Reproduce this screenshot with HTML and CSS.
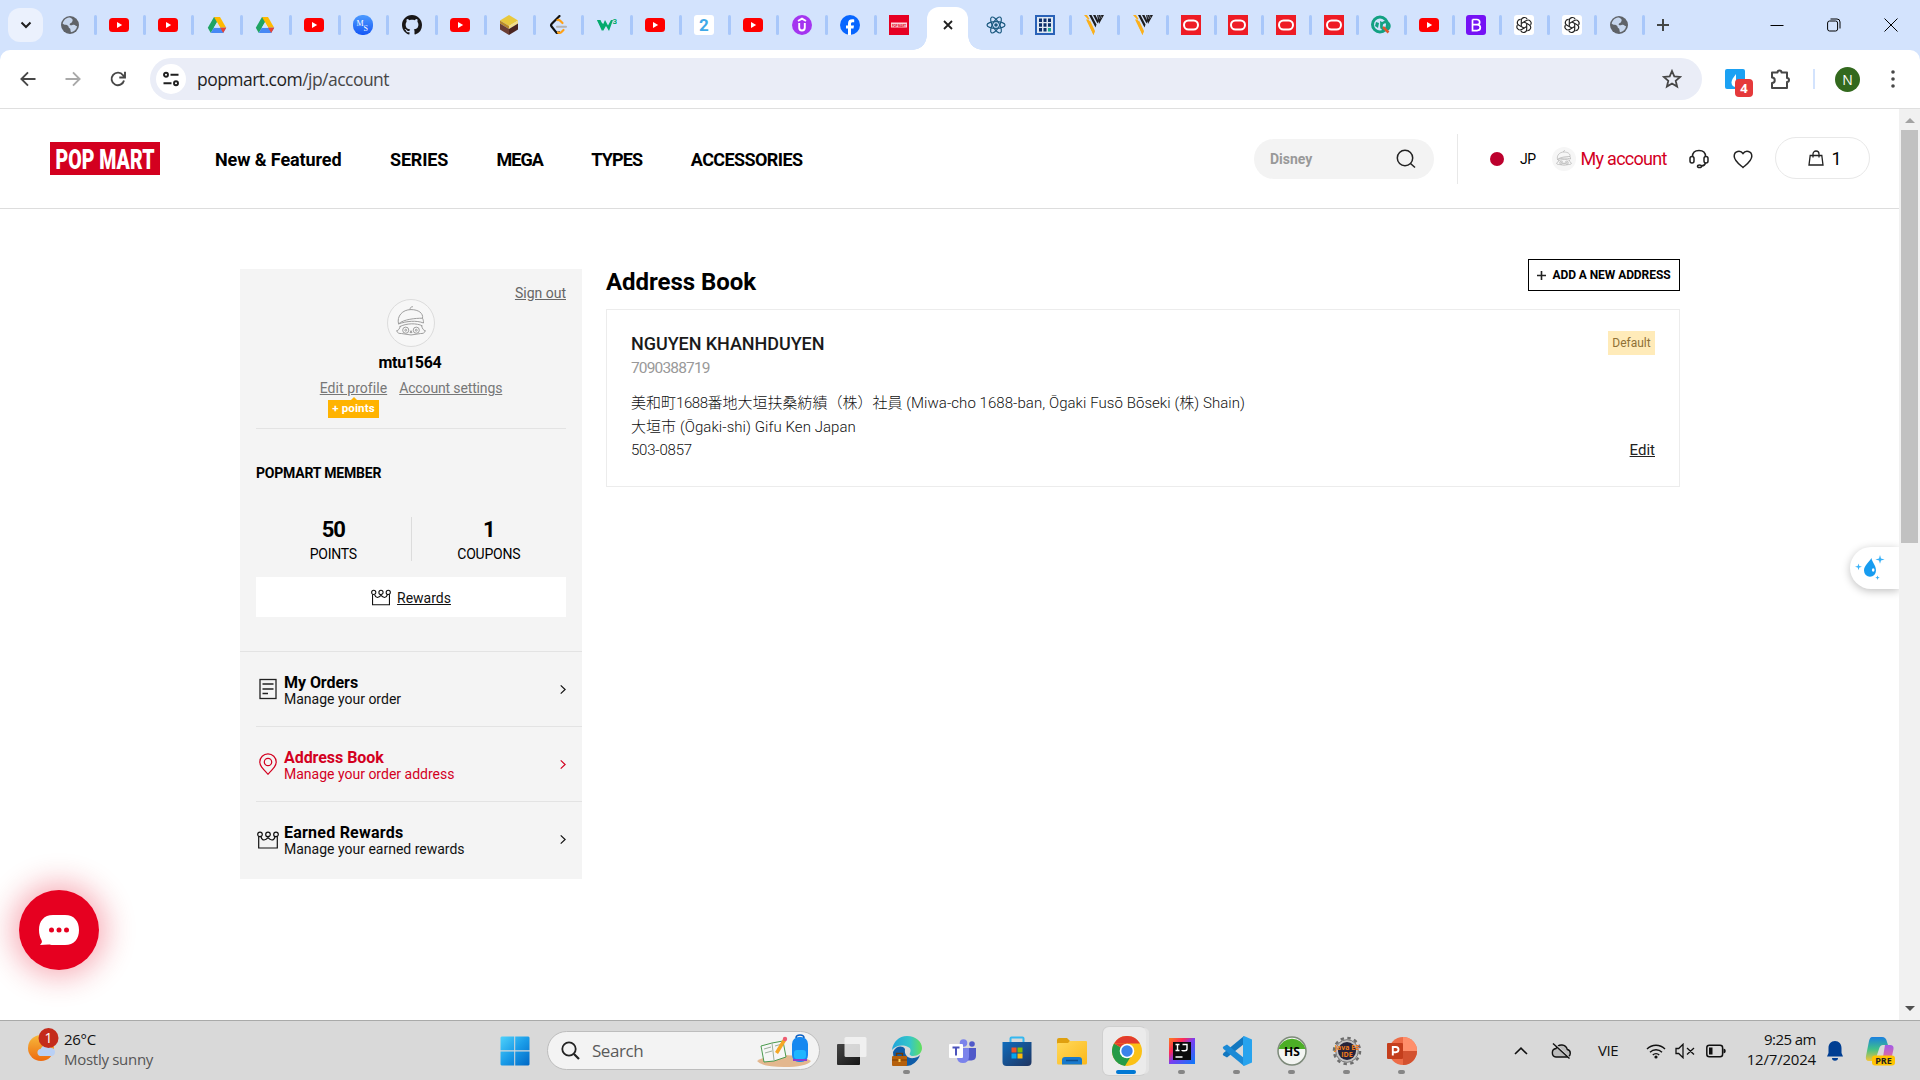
FILE: index.html
```html
<!DOCTYPE html>
<html lang="en">
<head>
<meta charset="utf-8">
<title>POP MART</title>
<link rel="stylesheet" href="styles.css">
</head>
<body>
<svg class="defs" width="0" height="0">
  <defs>
    <linearGradient id="g-win" x1="0" y1="0" x2="1" y2="1"><stop offset="0" stop-color="#4fd2fb"/><stop offset=".5" stop-color="#1a9ce8"/><stop offset="1" stop-color="#0067c5"/></linearGradient>
    <linearGradient id="g-edge" x1="0" y1="0" x2="1" y2="0"><stop offset="0" stop-color="#20a5dc"/><stop offset=".6" stop-color="#35c6c8"/><stop offset="1" stop-color="#63e05a"/></linearGradient>
    <linearGradient id="g-store" x1="0" y1="0" x2="1" y2="1"><stop offset="0" stop-color="#0f6cbd"/><stop offset="1" stop-color="#1f3460"/></linearGradient>
    <linearGradient id="g-folder" x1="0" y1="0" x2="1" y2="1"><stop offset="0" stop-color="#ffd95c"/><stop offset="1" stop-color="#fbb81a"/></linearGradient>
    <linearGradient id="g-ij" x1="0" y1="0" x2="1" y2="1"><stop offset="0" stop-color="#fc801d"/><stop offset=".3" stop-color="#fe2857"/><stop offset=".5" stop-color="#7a3df0"/><stop offset="1" stop-color="#087cfa"/></linearGradient>
    <linearGradient id="g-cop" x1="0" y1="0" x2="0" y2="1"><stop offset="0" stop-color="#1a7fe0"/><stop offset=".5" stop-color="#3fc08a"/><stop offset="1" stop-color="#f3c63a"/></linearGradient>
    <linearGradient id="g-cop2" x1="0" y1="0" x2="0" y2="1"><stop offset="0" stop-color="#a35be8"/><stop offset="1" stop-color="#f2708a"/></linearGradient>
    <linearGradient id="g-sun" x1="0" y1="0" x2="0" y2="1"><stop offset="0" stop-color="#f6b93b"/><stop offset="1" stop-color="#ee6a10"/></linearGradient>
    <linearGradient id="g-ms" x1="0" y1="0" x2="0" y2="1"><stop offset="0" stop-color="#4d9bff"/><stop offset="1" stop-color="#1557f5"/></linearGradient>
    <linearGradient id="g-task" x1="0" y1="0" x2="1" y2="1"><stop offset="0" stop-color="#444"/><stop offset="1" stop-color="#161616"/></linearGradient>
    <symbol id="globe" viewBox="0 0 20 20"><circle cx="10" cy="10" r="9" fill="#5f6368"/><path d="M9 2.500c-3 .3-5.800 3-6.300 6.300 1.800 1.700 3.800.7 5.300 1.900 1 .8.300 2 1.600 2.600 1.200.5.600 2.300 1.400 3.900 3.200-.5 5.600-2.900 6.100-6-1.600-.2-1.700-1.500-3.300-1.500-1.500 0-1.900 1-3.300.5-1.600-.6-.3-2.300.8-2.500 1.500-.3.500-1.500 1.500-2.700C11.800 3 10 2.500 9 2.500z" fill="#d3e3fd" opacity=".9"/></symbol>
    <symbol id="yt" viewBox="0 0 20 20"><rect y="3" width="20" height="14" rx="3.500" fill="#f00"/><path d="M8 7l5.200 3L8 13z" fill="#fff"/></symbol>
    <symbol id="drive" viewBox="0 0 20 20"><path d="M7 2h6l-6.300 11L3.800 18 .8 12.800z" fill="#1fa463"/><path d="M7 2h6l6.200 10.800h-6z" fill="#ffba00"/><path d="M3.800 18l3-5.200h12.400L16.200 18z" fill="#4688f4"/><path d="M13.200 12.800h6L16.200 18z" fill="#ea4335"/><path d="M10 7.200l3.200 5.600H6.800z" fill="#d3e3fd"/></symbol>
    <symbol id="v" viewBox="0 0 20 20"><path d="M0 0h3l2.500 4-1.400.6zM4 7l2-1.500L11 16l-1.500 4z" fill="#fbb01b"/><path d="M2 4.500h2.500l6 12L9.500 20z" fill="#fbb01b"/><path d="M5 0h2.500l5 9.500-1 3zM9 0h2.500l3 6-1 2.500zM13 0h7l-5 9z" fill="#1d1d1f"/><path d="M14 0l2 4M16.500 0l1 3" stroke="#d3e3fd" stroke-width=".5"/></symbol>
    <symbol id="oracle" viewBox="0 0 20 20"><path d="M0 0h20v20H0z" fill="#ee1c25"/><rect x="3" y="5.500" width="14" height="9" rx="4.500" fill="none" stroke="#fff" stroke-width="2"/></symbol>
    <path id="strand" d="M7.300 11.500V5.700a3.100 3.100 0 0 1 5.900-1.400"/>
    <symbol id="gpt" viewBox="0 0 20 20"><rect width="20" height="20" rx="3" fill="#fff"/><g fill="none" stroke="#222" stroke-width="1.150"><use href="#strand"/><use href="#strand" transform="rotate(60 10 10)"/><use href="#strand" transform="rotate(120 10 10)"/><use href="#strand" transform="rotate(180 10 10)"/><use href="#strand" transform="rotate(240 10 10)"/><use href="#strand" transform="rotate(300 10 10)"/></g></symbol>
    <symbol id="crown" viewBox="0 0 22 18"><g fill="none" stroke="currentColor" stroke-width="1.200"><circle cx="3" cy="3.400" r="2.300"/><circle cx="11" cy="3.400" r="2.300"/><circle cx="19" cy="3.400" r="2.300"/><path d="M1.700 5.500V17h18.600V5.500M4 6q1 3 3 3 2.200-.3 4-2.300 1.800 2 4 2.300 2 0 3-3"/></g></symbol>
    <symbol id="molly" viewBox="0 0 48 48"><g fill="none" stroke="#9a9a9a" stroke-width="1"><path d="M11 25c-2-8 4-15 13-15 8 0 13 4 12 9-7 0-20 1-25 6zM23 10c0-2 1-3 3-3M11 25c8-3 19-4 26-1M36 19c1 2 1 3 1 5M12 28c7-4 18-4 24-1"/><path d="M13 27c-1 3-2 5-4 5 1 3 3 3 5 3q10 3 20 0c2 0 4 0 5-3-2 0-3-2-4-5"/><circle cx="18.500" cy="31.500" r="3.200"/><circle cx="29.500" cy="31.500" r="3.200"/><circle cx="18.500" cy="31.500" r="1"/><circle cx="29.500" cy="31.500" r="1"/><path d="M23 34l1-2 1 2z"/></g></symbol>
    <symbol id="chev" viewBox="0 0 8 12"><path d="M1.500 1.500L6.300 6l-4.800 4.500" fill="none" stroke="currentColor" stroke-width="1.300"/></symbol>
  </defs>
</svg>

<header class="tabstrip">
  <div class="tab-search"><svg width="12" height="8" viewBox="0 0 12 8"><path d="M1.500 1.500L6 6l4.500-4.500" fill="none" stroke="#1f1f1f" stroke-width="2"/></svg></div>
  <div class="tabs">
    <div class="tab"><svg><use href="#globe"/></svg></div>
    <div class="tab"><svg><use href="#yt"/></svg></div>
    <div class="tab"><svg><use href="#yt"/></svg></div>
    <div class="tab"><svg><use href="#drive"/></svg></div>
    <div class="tab"><svg><use href="#drive"/></svg></div>
    <div class="tab"><svg><use href="#yt"/></svg></div>
    <div class="tab"><svg viewBox="0 0 20 20"><rect width="20" height="20" rx="9" fill="url(#g-ms)"/><text x="3.500" y="11" class="ms">M</text><text x="10.500" y="15.500" class="ms">S</text></svg></div>
    <div class="tab"><svg viewBox="0 0 16 16"><path fill="#191717" d="M8 0C3.580 0 0 3.580 0 8c0 3.540 2.290 6.530 5.470 7.590.4.070.55-.17.55-.38 0-.19-.01-.82-.01-1.490-2.010.37-2.530-.49-2.690-.94-.09-.23-.48-.94-.82-1.130-.28-.15-.68-.52-.01-.53.63-.01 1.080.58 1.230.82.72 1.210 1.870.87 2.330.66.07-.52.28-.87.51-1.070-1.780-.2-3.640-.89-3.640-3.950 0-.87.31-1.590.82-2.150-.08-.2-.36-1.020.08-2.120 0 0 .67-.21 2.200.82.64-.18 1.320-.27 2-.27s1.360.09 2 .27c1.530-1.040 2.200-.82 2.200-.82.44 1.100.16 1.920.08 2.120.51.56.82 1.270.82 2.150 0 3.070-1.870 3.750-3.650 3.950.29.25.54.73.54 1.480 0 1.070-.01 1.930-.01 2.200 0 .21.15.46.55.38A8.010 8.010 0 0 0 16 8c0-4.420-3.580-8-8-8z"/></svg></div>
    <div class="tab"><svg><use href="#yt"/></svg></div>
    <div class="tab"><svg viewBox="0 0 20 20"><path d="M10 0l9 5.500L10 11 1 5.500z" fill="#e8c83c"/><path d="M1 5.500L10 11v3L1 8.500z" fill="#b98a2a"/><path d="M19 5.500L10 11v3l9-5.500z" fill="#f4dc86"/><path d="M1 8.500l9 5.500v6l-9-5.500z" fill="#6b3f35"/><path d="M19 8.500L10 14v6l9-5.500z" fill="#4a2520"/></svg></div>
    <div class="tab"><svg viewBox="0 0 20 20"><path d="M11.500 1L4 8.500q-1.800 1.800 0 3.600l4 5q1.500 1.500 3 .2" fill="none" stroke="#111" stroke-width="2.200" stroke-linecap="round"/><path d="M9.500 5q1.500-.5 3 1l2 2M10 17.500q2 1 3.500-.5l2-2" fill="none" stroke="#ffa116" stroke-width="2.200" stroke-linecap="round"/><path d="M9 11.700h9" stroke="#b3b3b3" stroke-width="2" stroke-linecap="round"/></svg></div>
    <div class="tab"><svg viewBox="0 0 20 20"><path d="M0 5h3.500l2.300 5L8 5l3 5.500L14 5h2l-4 11-3-5-3 5z" fill="#04aa6d"/><path d="M0 5l5 11 3-6z" fill="#04aa6d"/><text x="15.500" y="9" class="w3">3</text></svg></div>
    <div class="tab"><svg><use href="#yt"/></svg></div>
    <div class="tab"><svg viewBox="0 0 20 20"><rect width="20" height="20" rx="3" fill="#fff"/><text x="10" y="16" text-anchor="middle" class="two">2</text></svg></div>
    <div class="tab"><svg><use href="#yt"/></svg></div>
    <div class="tab"><svg viewBox="0 0 20 20"><circle cx="10" cy="10" r="10" fill="#a435f0"/><path d="M6 6l4-2.300L14 6M7.200 8v4.500q0 3 2.800 3t2.800-3V8" fill="none" stroke="#fff" stroke-width="1.900"/></svg></div>
    <div class="tab"><svg viewBox="0 0 20 20"><circle cx="10" cy="10" r="10" fill="#0866ff"/><path d="M8 20v-6.500H6v-3h2V8.700c0-3 1.400-4.400 4.300-4.400.6 0 1.500.1 1.900.2v2.700h-1.300c-1.500 0-1.900.6-1.900 1.900v1.400h3l-.5 3H11V20z" fill="#fff"/></svg></div>
    <div class="tab nosep"><svg viewBox="0 0 20 20"><path d="M0 0h20v20H0z" fill="#e60023"/><rect x="2" y="7.500" width="16" height="5" fill="#fbd5d9"/><text x="3" y="11.500" textLength="14" class="pm">POP MART</text></svg></div>
    <div class="tab active"><span class="shape"><svg viewBox="0 0 12 12"><path d="M2 2l8 8M10 2l-8 8" stroke="#1f1f1f" stroke-width="1.800"/></svg></span></div>
    <div class="tab"><svg viewBox="0 0 20 20"><g fill="none" stroke="#1c5a80" stroke-width="1.200"><ellipse cx="10" cy="10" rx="9" ry="3.400"/><ellipse cx="10" cy="10" rx="9" ry="3.400" transform="rotate(60 10 10)"/><ellipse cx="10" cy="10" rx="9" ry="3.400" transform="rotate(120 10 10)"/></g><circle cx="10" cy="10" r="1.800" fill="#1c5a80"/></svg></div>
    <div class="tab"><svg viewBox="0 0 20 20"><rect x="1" y="1" width="18" height="18" fill="#dfe8f2" stroke="#2a62b8" stroke-width="2"/><path d="M4 3.500h3v3.500H4zM8.500 3.500h3v3.500h-3zM13 3.500h3v3.500h-3zM4 8.300h3v3.500H4zM8.500 8.300h3v3.500h-3zM13 8.300h3v3.500h-3zM4 13h3v3.500H4zM8.500 13h3v3.500h-3z" fill="#0d2f6b"/><path d="M13 13h3v3.500h-3z" fill="#1ba58c"/></svg></div>
    <div class="tab"><svg><use href="#v"/></svg></div>
    <div class="tab"><svg><use href="#v"/></svg></div>
    <div class="tab slim"><svg><use href="#oracle"/></svg></div>
    <div class="tab slim"><svg><use href="#oracle"/></svg></div>
    <div class="tab slim"><svg><use href="#oracle"/></svg></div>
    <div class="tab slim"><svg><use href="#oracle"/></svg></div>
    <div class="tab slim"><svg viewBox="0 0 20 20"><circle cx="9" cy="9.500" r="7.500" fill="none" stroke="#12a182" stroke-width="3"/><circle cx="14.500" cy="11" r="4" fill="none" stroke="#12a182" stroke-width="2.500"/><path d="M5 7l3 1-1 5-3-2zM9 6l2 1v5l-1.500 2z" fill="#12a182"/><path d="M12 12l5.500 5.500" stroke="#e0562d" stroke-width="2.500"/></svg></div>
    <div class="tab slim"><svg><use href="#yt"/></svg></div>
    <div class="tab slim"><svg viewBox="0 0 20 20"><rect width="20" height="20" rx="3" fill="#7512f5"/><path d="M6.500 4.500h4.200q3 0 3 2.700 0 2.400-3 2.400H6.500M6.500 9.600h4.500q3.300 0 3.300 3 0 3-3.300 3H6.500zV4.500" fill="none" stroke="#fff" stroke-width="1.700"/></svg></div>
    <div class="tab slim"><svg><use href="#gpt"/></svg></div>
    <div class="tab slim"><svg><use href="#gpt"/></svg></div>
    <div class="tab slim"><svg><use href="#globe"/></svg></div>
  </div>
  <div class="new-tab"><svg width="14" height="14" viewBox="0 0 14 14"><path d="M7 1v12M1 7h12" stroke="#444746" stroke-width="2"/></svg></div>
  <div class="win-ctl">
    <svg width="14" height="14" viewBox="0 0 14 14"><path d="M.5 7.500h13" stroke="#000"/></svg>
    <svg width="14" height="14" viewBox="0 0 14 14"><rect x=".6" y="3" width="10" height="10" rx="2" fill="none" stroke="#000"/><path d="M3.500 1h6.500q3 0 3 3v6.500" fill="none" stroke="#000"/></svg>
    <svg width="14" height="14" viewBox="0 0 14 14"><path d="M.5.5l13 13M13.500.5l-13 13" stroke="#000"/></svg>
  </div>
</header>

<div class="toolbar-wrap"><div class="toolbar">
  <div class="nav-btns">
    <svg width="16" height="16" viewBox="0 0 16 16"><path d="M15.500 8H1.500M8 1.300L1.400 8 8 14.700" fill="none" stroke="#474747" stroke-width="1.900"/></svg>
    <svg width="16" height="16" viewBox="0 0 16 16"><path d="M.5 8h14M8 1.300L14.600 8 8 14.700" fill="none" stroke="#a9a9a9" stroke-width="1.900"/></svg>
    <svg width="16" height="16" viewBox="0 0 16 16"><path d="M14 9.500A6.300 6.300 0 1 1 13 4.200L14.500 6M15 .8v5.700H9.300" fill="none" stroke="#474747" stroke-width="1.900"/></svg>
  </div>
  <div class="omnibox">
    <span class="site-info"><svg width="16" height="16" viewBox="0 0 16 16"><g fill="none" stroke="#1f1f1f" stroke-width="1.900"><circle cx="3" cy="3.700" r="2"/><path d="M7.500 3.700H15.500M.5 12.300h8"/><circle cx="13" cy="12.300" r="2"/></g></svg></span>
    <span class="url">popmart.com<span class="path">/jp/account</span></span>
    <svg class="star" width="20" height="20" viewBox="0 0 20 20"><path d="M10 2l2.300 5.400 5.900.5-4.500 3.900 1.400 5.800L10 14.500l-5.100 3.100 1.400-5.800L1.800 7.900l5.900-.5z" fill="none" stroke="#474747" stroke-width="1.800"/></svg>
  </div>
  <div class="ext"><svg width="20" height="20" viewBox="0 0 20 20"><rect width="20" height="20" rx="2" fill="#1ba1f3"/><path d="M11 5c-3 4-4.500 6-4.500 8.500 0 3 2 4.500 4.500 4.500z" fill="#fff"/></svg><b>4</b></div>
  <svg class="puzzle" width="22" height="22" viewBox="0 0 22 22"><path d="M3 4.500h5.500a2 2 0 0 1 4 0H18v5.500a2 2 0 0 1 0 4V20H3v-5a2.600 2.600 0 0 0 0-5.500z" fill="none" stroke="#474747" stroke-width="2" stroke-linejoin="round"/></svg>
  <i class="vbar"></i>
  <span class="profile">N</span>
  <svg class="kebab" width="4" height="20" viewBox="0 0 4 20"><g fill="#474747"><circle cx="2" cy="3" r="1.800"/><circle cx="2" cy="10" r="1.800"/><circle cx="2" cy="17" r="1.800"/></g></svg>
</div></div>

<div class="viewport">
  <div class="page">
    <nav class="site-head">
      <svg class="logo" width="110" height="33" viewBox="0 0 110 33"><text x="5.500" y="26.500" textLength="99" lengthAdjust="spacingAndGlyphs">POP MART</text></svg>
      <div class="links"><span>New &amp; Featured</span><span>SERIES</span><span>MEGA</span><span>TYPES</span><span>ACCESSORIES</span></div>
      <div class="search"><span>Disney</span><svg width="20" height="20" viewBox="0 0 20 20"><circle cx="9" cy="9" r="7.700" fill="none" stroke="#222" stroke-width="1.500"/><path d="M14.500 14.500l4.500 4" stroke="#222" stroke-width="1.500"/></svg></div>
      <i class="head-bar"></i>
      <i class="flag"></i>
      <span class="jp">JP</span>
      <span class="mini-av"><svg width="24" height="24"><use href="#molly"/></svg></span>
      <span class="acct">My account</span>
      <svg class="support" width="20" height="20" viewBox="0 0 20 20"><g fill="none" stroke="#222" stroke-width="1.500"><path d="M3.500 7.500C3.500 3.500 6 1.500 10 1.500s6.500 2 6.500 6"/><rect x="1" y="7.500" width="4" height="6.500" rx="2"/><rect x="15" y="7.500" width="4" height="6.500" rx="2"/><path d="M16.500 14q-.5 2.500-4 3"/><ellipse cx="10.500" cy="17.300" rx="2" ry="1.300"/></g></svg>
      <svg class="heart" width="20" height="20" viewBox="0 0 20 20"><path d="M10 4.500C7.500.8 1.200 1.700 1.200 7.200c0 4.500 4.800 7.800 8.800 11.300 4-3.500 8.800-6.800 8.800-11.300 0-5.500-6.300-6.400-8.800-2.700z" fill="none" stroke="#222" stroke-width="1.500"/></svg>
      <span class="cart"><svg width="16" height="16" viewBox="0 0 16 16"><path d="M2.200 5.500h11.600L15 15H1zM5 7.500V4a3 3 0 0 1 6 0v3.500" fill="none" stroke="#222" stroke-width="1.300"/></svg><span>1</span></span>
    </nav>

    <div class="content">
      <aside class="side">
        <section class="user">
          <div class="signout"><a>Sign out</a></div>
          <div class="avatar"><svg width="46" height="46"><use href="#molly"/></svg></div>
          <div class="uname">mtu1564</div>
          <div class="ulinks"><a>Edit profile</a><a class="settings">Account settings</a></div>
          <div class="pts"><span><b>+ points</b></span></div>
        </section>
        <section class="member">
          <h3>POPMART MEMBER</h3>
          <div class="stats"><div><b>50</b><span>POINTS</span></div><div><b>1</b><span>COUPONS</span></div></div>
          <div class="rewards"><svg width="20" height="17"><use href="#crown"/></svg><a>Rewards</a></div>
        </section>
        <ul class="menu">
          <li><svg class="mi" width="22" height="22" viewBox="0 0 22 22"><g fill="none" stroke="#222" stroke-width="1.300"><rect x="3" y="1.500" width="16" height="19"/><path d="M5.500 6h11M5.500 11h11M5.500 15.500h5.500"/></g></svg><div><b>My Orders</b><span>Manage your order</span></div><svg class="ch"><use href="#chev"/></svg></li>
          <li class="on"><svg class="mi" width="22" height="22" viewBox="0 0 22 22"><g fill="none" stroke="currentColor" stroke-width="1.200"><path d="M11 21.300C5.500 15.500 2.800 12.800 2.800 9a8.200 8.200 0 0 1 16.400 0c0 3.800-2.700 6.500-8.200 12.300z"/><circle cx="11" cy="9" r="3.700"/></g></svg><div><b>Address Book</b><span>Manage your order address</span></div><svg class="ch"><use href="#chev"/></svg></li>
          <li><svg class="mi" width="22" height="18"><use href="#crown"/></svg><div><b class="earned">Earned Rewards</b><span>Manage your earned rewards</span></div><svg class="ch"><use href="#chev"/></svg></li>
        </ul>
      </aside>
      <main class="book">
        <div class="book-head"><h1>Address Book</h1><button><svg width="9" height="9" viewBox="0 0 9 9"><path d="M4.500 0v9M0 4.500h9" stroke="#222" stroke-width="1.600"/></svg><span>ADD A NEW ADDRESS</span></button></div>
        <article class="card">
          <div class="card-l">
            <h2>NGUYEN KHANHDUYEN</h2>
            <p class="phone">7090388719</p>
            <p class="addr">美和町<span class="num">1688</span>番地大垣扶桑紡績（株）社員 <span class="latin">(Miwa-cho 1688-ban, Ōgaki Fusō Bōseki (株) Shain)</span></p>
            <p class="addr city">大垣市 (Ōgaki-shi) Gifu Ken Japan</p>
            <p class="addr"><span class="zip">503-0857</span></p>
          </div>
          <div class="card-r"><span class="default">Default</span><a>Edit</a></div>
        </article>
      </main>
    </div>
    <div class="chat"><svg width="40" height="31" viewBox="0 0 40 31"><path d="M14 0h12c9 0 14 6 14 15s-5 15-14 15H14c-2 0-3 0-4.500-.4L1 30c1.500-1.500 2.500-3 1.500-5C1 22.500 0 19 0 15 0 6 5 0 14 0z" fill="#fff"/><g fill="#e60020"><circle cx="12.500" cy="15" r="2.500"/><circle cx="20" cy="15" r="2.500"/><circle cx="27.500" cy="15" r="2.500"/></g></svg></div>
    <div class="drop"><svg width="30" height="28" viewBox="0 0 30 28"><path d="M16.500 3c.3 4 4.500 7 4.500 12.500a6 6.200 0 0 1-12 0C9 10.500 13.500 8 16.500 3z" fill="#179cf0"/><ellipse cx="18.200" cy="15" rx="1.300" ry="1.800" fill="#fff"/><path d="M25 0l1 3.400 3.600 1-3.600 1-1 3.400-1-3.400-3.600-1 3.600-1zM3.500 8.500l.8 2.500 2.700.8-2.700.8-.8 2.600-.8-2.600L0 11.800l2.700-.8zM22.500 20.500l.6 1.600 1.600.6-1.600.6-.6 1.700-.6-1.700-1.600-.6 1.600-.6z" fill="#38b1f8"/></svg></div>
  </div>
  <div class="scroll"><i class="up"></i><i class="thumb"></i><i class="down"></i></div>
</div>

<footer class="taskbar">
  <div class="weather">
    <svg width="32" height="36" viewBox="0 0 32 36"><circle cx="14" cy="21" r="13" fill="url(#g-sun)"/><path d="M13 29h11a4 4 0 0 0 0-8 6 6 0 0 0-10.500 1A3.600 3.600 0 0 0 13 29z" fill="#b9d0f5"/><circle cx="21.500" cy="11" r="10" fill="#c42b1c"/><text x="21.500" y="16" text-anchor="middle" class="wb">1</text></svg>
    <div><span>26°C</span><span class="sub">Mostly sunny</span></div>
  </div>
  <div class="apps">
    <svg class="start" width="30" height="30" viewBox="0 0 30 30"><path d="M1.500.5h12.700v13.700H.5V1.500zM15.200.5h13.300l1 1v12.700H15.200zM.5 15.500h13.700v14H1.500l-1-1zM15.200 15.500h14.300v13l-1 1H15.200z" fill="url(#g-win)"/></svg>
    <div class="tsearch"><svg width="19" height="19" viewBox="0 0 19 19"><circle cx="8" cy="8" r="6.700" fill="none" stroke="#222" stroke-width="1.800"/><path d="M13 13l5 5" stroke="#222" stroke-width="2.200"/></svg><span>Search</span>
      <svg class="art" width="58" height="34" viewBox="0 0 58 34"><path d="M2 27q6-5 26-6 20 0 28 6-5 6-27 6Q7 33 2 27z" fill="#e3b78e"/><path d="M6 12l11-3 11-2 3 16-12 4-10 1z" fill="#f6f6f6" stroke="#4a9a4e" stroke-width="1"/><path d="M17 9l2 17M9 15l7-2M10 19l7-2M20 12l7-2" stroke="#9cae9c"/><path d="M20 18L28 5l3 2-8 13z" fill="#f5a623"/><circle cx="30" cy="5" r="2.200" fill="#ee5d72"/><rect x="37" y="3" width="16" height="25" rx="7" fill="#1688f0"/><path d="M41 4q0-3 4-3t4 3" fill="none" stroke="#0d5fc0" stroke-width="1.500"/><rect x="39" y="16" width="12" height="9" rx="3" fill="#1fb6ff"/><path d="M38 26h14" stroke="#8a3fd0" stroke-width="2"/></svg></div>
    <div class="app"><svg viewBox="0 0 30 30"><rect x="0" y="8" width="23" height="21" rx="1" fill="url(#g-task)"/><rect x="7.500" y="1" width="22" height="20" rx="1.500" fill="#f3f3f3" opacity=".85"/></svg></div>
    <div class="app dot"><svg viewBox="0 0 30 30"><path d="M28 19c-2 6-7 11-14 11C6 30 1 24 1 16c3-6 9-7 12-3-1 6 3 10 9 9 3-.5 4-1 6-3z" fill="#0f5ca8"/><path d="M0 14C1 6 7 0 15 0c9 0 15 6 15 12 0 5-4 8-9 8-3 0-4-2-3-3 1-2 1-5-2-6C10 8 3 10 0 14z" fill="url(#g-edge)"/><rect x="0" y="20" width="15" height="10" rx="1" fill="#b5600c"/><path d="M0 24h15" stroke="#7a3d05"/><path d="M4.500 20v-2.500h6V20" fill="none" stroke="#6b3a08" stroke-width="1.500"/><rect x="6.500" y="23" width="2" height="3" fill="#ffd35a"/></svg></div>
    <div class="app"><svg viewBox="0 0 30 30"><circle cx="16.500" cy="7" r="3.800" fill="#7b83eb"/><circle cx="25" cy="8" r="2.800" fill="#5059c9"/><path d="M20 12h9v8q0 4-4.500 4.500H20z" fill="#5059c9"/><path d="M11 12h11v9q-.5 6-6 6t-6-5z" fill="#7b83eb"/><rect x="2" y="8" width="14" height="14" rx="1" fill="#fff"/><path d="M5.500 11.500h7M9 11.500v8" stroke="#4b53bc" stroke-width="2"/></svg></div>
    <div class="app"><svg viewBox="0 0 30 30"><path d="M8.500 6V2.500q0-1 1-1h11q1 0 1 1V6" fill="none" stroke="#35b8f0" stroke-width="2"/><path d="M.5 6h29v20q0 4-4 4h-21q-4 0-4-4z" fill="url(#g-store)"/><path d="M9.500 11.500h5v5h-5z" fill="#f35325"/><path d="M15.500 11.500h5v5h-5z" fill="#81bc06"/><path d="M9.500 17.500h5v5h-5z" fill="#05a6f0"/><path d="M15.500 17.500h5v5h-5z" fill="#ffba08"/></svg></div>
    <div class="app"><svg viewBox="0 0 30 30"><path d="M0 4q0-2 2-2h8l3 3-2 4H0z" fill="#dfa00f"/><path d="M0 8q0-1 1-1h10l2-2h16q1 0 1 1v21q0 1.500-1.500 1.500h-27Q0 28.500 0 27z" fill="url(#g-folder)"/><path d="M5 28.500V24q0-3 3-3h14q3 0 3 3v4.500z" fill="#1779cc"/><path d="M9 24.500h12" stroke="#0c4e8f" stroke-width="1.500"/></svg></div>
    <div class="app run"><svg viewBox="0 0 30 30"><circle cx="15" cy="15" r="15" fill="#fbc116"/><path d="M2 7.500a15 15 0 0 0 11 22.400l7-11.500L15 15z" fill="#259b48"/><path d="M2 7.500A15 15 0 0 1 28 7.500H15z" fill="#e33b2e"/><path d="M2 7.500L15 7.500 8.700 11.200z" fill="#e33b2e"/><circle cx="15" cy="15" r="7.300" fill="#fff"/><circle cx="15" cy="15" r="5.700" fill="#3b82ea"/></svg></div>
    <div class="app dot"><svg viewBox="0 0 30 30"><rect x="2" y="2" width="26" height="26" fill="url(#g-ij)"/><rect x="6" y="6" width="18" height="18" fill="#0a0a0a"/><path d="M8.500 8.500h4M10.500 8.500v6M8.500 14.500h4M15.500 8.500h4.500v4.500q0 1.800-2.500 1.800t-2.500-.8M8.500 21h7" fill="none" stroke="#fff" stroke-width="1.400"/></svg></div>
    <div class="app dot"><svg viewBox="0 0 30 30"><path d="M22 0v8L5 21.500l-3.500-2Q0 18.500 1.500 17z" fill="#1277bf"/><path d="M22 30v-8L5 8.500l-3.500 2Q0 11.500 1.500 13z" fill="#1b8ad6"/><path d="M22 0l8 3.500v23L22 30q-1-1-1-2V2q0-1 1-2z" fill="#27a3ee"/></svg></div>
    <div class="app dot"><svg viewBox="0 0 30 30"><circle cx="15" cy="15" r="14" fill="#f3f5f2" stroke="#7d8a7a" stroke-width="1.500"/><path d="M1.500 13a14 14 0 0 1 27 0z" fill="#4caf26"/><text x="15" y="19.500" text-anchor="middle" class="hs">HS</text></svg></div>
    <div class="app dot"><svg viewBox="0 0 30 30"><circle cx="15" cy="15" r="13" fill="none" stroke="#6d6d6d" stroke-width="2.500" stroke-dasharray="3.400 3.400"/><circle cx="15" cy="15" r="11.300" fill="#c4c4c4" stroke="#777"/><circle cx="15" cy="15" r="9" fill="#26233a"/><text x="15" y="14" text-anchor="middle" class="je">Java EE</text><text x="15" y="21" text-anchor="middle" class="je">IDE</text></svg></div>
    <div class="app dot"><svg viewBox="0 0 30 30"><circle cx="16" cy="15" r="14" fill="#ed6c47"/><path d="M16 1a14 14 0 0 1 14 14H16z" fill="#ff8f6b"/><path d="M16 29a14 14 0 0 0 14-14H16z" fill="#d35230"/><rect x="0" y="7" width="16" height="16" rx="1" fill="#c43e1c"/><path d="M5.800 19.500v-8.500h3q2.700 0 2.700 2.600t-2.700 2.600h-3" fill="none" stroke="#fff" stroke-width="1.900"/></svg></div>
  </div>
  <div class="tray">
    <svg class="t-up" width="14" height="8" viewBox="0 0 14 8"><path d="M1 7l6-5.800L13 7" fill="none" stroke="#111" stroke-width="1.600"/></svg>
    <svg class="t-cloud" width="20" height="16" viewBox="0 0 20 16"><path d="M5 14h10.500a3.800 3.800 0 0 0 .8-7.500A6 6 0 0 0 5 5.500 4.300 4.300 0 0 0 5 14z" fill="#bbb" stroke="#111" stroke-width="1.400"/><path d="M3.500 .5l15 14" stroke="#d9d9d9" stroke-width="1.500"/><path d="M2 .5l16.500 15" stroke="#111" stroke-width="1.400"/></svg>
    <span class="vie">VIE</span>
    <svg class="t-wifi" width="20" height="16" viewBox="0 0 20 16"><g fill="none" stroke="#111" stroke-width="1.400"><path d="M1 6a12.700 12.700 0 0 1 18 0M4 9.200a8.500 8.500 0 0 1 12 0M6.800 12a4.500 4.500 0 0 1 6.400 0"/></g><circle cx="10" cy="14" r="1.600" fill="#111"/></svg>
    <svg class="t-vol" width="20" height="16" viewBox="0 0 20 16"><path d="M1 5.500v5h2.700L8 14.700V1.300L3.700 5.500zM12 5l7 6.500M19 5l-7 6.500" fill="none" stroke="#111" stroke-width="1.300"/></svg>
    <svg class="t-bat" width="20" height="14" viewBox="0 0 20 14"><rect x=".8" y="1.300" width="15.800" height="11.400" rx="2.500" fill="none" stroke="#111" stroke-width="1.500"/><rect x="3" y="3.500" width="3.500" height="7" fill="#111"/><path d="M17.500 4.500q2.300.3 2.300 2.500t-2.300 2.500z" fill="#111"/></svg>
    <div class="clock"><span class="time">9:25 am</span><span>12/7/2024</span></div>
    <svg class="t-bell" width="18" height="20" viewBox="0 0 18 20"><path d="M9 0C5 0 2.500 3 2.500 7v5L1 15.500h16L15.500 12V7C15.500 3 13 0 9 0zM6 17a3 2.800 0 0 0 6 0z" fill="#003e92"/></svg>
    <svg class="t-cop" width="30" height="30" viewBox="0 0 30 30"><path d="M7 1h10q4 0 5 5l1 3h-5q-3 0-4 4l-3 9q-1 3-4 3H4q-4 0-3-5L4 5q1-4 3-4z" fill="url(#g-cop)"/><path d="M20 9h5q4 0 3.500 4L27 20q-1 5-5 5h-8q3 0 4-4z" fill="url(#g-cop2)"/><rect x="7" y="19.500" width="23" height="10" rx="3" fill="#ffc400"/><text x="18.500" y="27.700" text-anchor="middle" class="pre">PRE</text></svg>
  </div>
</footer>
</body>
</html>
```
FILE: styles.css
```css
* { box-sizing: border-box; }
body { margin: 0; width: 1920px; height: 1080px; overflow: hidden; display: flex; flex-direction: column; background: #fff; font-family: Roboto, "Noto Sans CJK JP", sans-serif; color: #000; }
svg { display: block; flex: none; }
.defs { position: absolute; }
h1, h2, h3, p, ul { margin: 0; padding: 0; font-weight: normal; }
span, a, b { white-space: nowrap; }

/* tab strip */
.tabstrip { height: 50px; background: #d3e3fd; display: flex; align-items: center; flex: none; }
.tab-search { width: 35px; height: 34px; margin-left: 8px; border-radius: 12px; background: #ebf1fd; display: flex; align-items: center; justify-content: center; }
.tabs { display: flex; margin-left: 3px; height: 50px; flex: none; }
.tab { width: 48.76px; height: 50px; display: flex; align-items: center; justify-content: center; position: relative; flex: none; }
.tab svg { width: 20px; height: 20px; }
.tab::after { content: ""; position: absolute; right: -2px; top: 15px; width: 3px; height: 20px; border-radius: 2px; background: #a8c7fa; }
.tab.nosep::after, .tab.active::after { display: none; }
.tab.slim { width: 47.6px; }
.tab.active { width: 48.5px; align-items: flex-end; }
.tab.active .shape { width: 41px; height: 43px; background: #fff; border-radius: 12px 12px 0 0; display: flex; align-items: center; justify-content: center; padding-bottom: 7px; position: relative; }
.shape::before, .shape::after { content: ""; position: absolute; bottom: 0; width: 14px; height: 14px; }
.shape::before { left: -14px; background: radial-gradient(circle at 0 0, transparent 13.5px, #fff 14px); }
.shape::after { right: -14px; background: radial-gradient(circle at 100% 0, transparent 13.5px, #fff 14px); }
.tab .shape svg { width: 12px; height: 12px; }
.ms { font: 8px "Liberation Serif", serif; fill: #fff; }
.w3 { font: bold 8px Roboto, sans-serif; fill: #04aa6d; }
.two { font: bold 17px Roboto, sans-serif; fill: #3fa9e8; }
.pm { font: bold 3px Roboto, sans-serif; fill: #e60023; }
.new-tab { margin-left: 13px; }
.win-ctl { display: flex; gap: 43px; margin-left: auto; margin-right: 22px; }

/* toolbar */
.toolbar-wrap { background: #d3e3fd; flex: none; }
.toolbar { height: 59px; background: #fff; border-radius: 10px 10px 0 0; border-bottom: 1px solid #dfdfdf; display: flex; align-items: center; }
.nav-btns { display: flex; gap: 29px; width: 150px; padding-left: 20px; }
.omnibox { width: 1552px; height: 42px; border-radius: 21px; background: #eaedf7; display: flex; align-items: center; padding: 0 20px 0 6px; }
.site-info { width: 30px; height: 30px; border-radius: 50%; background: #fff; display: flex; align-items: center; justify-content: center; }
.url { margin-left: 11px; font: 17.5px "Open Sans", sans-serif; letter-spacing: -.53px; color: #1f1f1f; }
.url .path { color: #474747; }
.star { margin-left: auto; }
.ext { margin-left: 23px; width: 20px; height: 20px; position: relative; }
.ext b { position: absolute; left: 10px; top: 10px; width: 18px; height: 18px; border-radius: 4px; background: #e5393b; color: #fff; font: bold 13px/18px "Open Sans", sans-serif; text-align: center; }
.puzzle { margin-left: 24px; }
.vbar { width: 2px; height: 20px; background: #d3e3fd; margin-left: 22px; }
.profile { width: 25px; height: 25px; border-radius: 50%; background: #33691e; color: #fff; font: 14px/25px "Open Sans", sans-serif; text-align: center; margin-left: 20px; }
.kebab { margin-left: 31px; }

/* site header */
.viewport { height: 911px; display: flex; flex: none; }
.page { width: 1899px; position: relative; }
.site-head { height: 100px; border-bottom: 1px solid #ddd; display: flex; align-items: center; padding-left: 50px; }
.logo { background: #d3001f; fill: #fff; font-weight: 900; font-size: 28px; overflow: visible; }
.links { display: flex; gap: 48.5px; margin-left: 55px; width: 1039px; font-weight: 700; font-size: 18px; line-height: 24px; padding-top: 2px; letter-spacing: -.1px; }
.links span:nth-child(2) { letter-spacing: -.2px; }
.links span:nth-child(3) { letter-spacing: -1px; }
.links span:nth-child(4) { letter-spacing: -.85px; }
.links span:nth-child(5) { letter-spacing: -.6px; }
.search { width: 180px; height: 40px; border-radius: 20px; background: #f3f3f3; display: flex; align-items: center; padding: 0 18px 0 16px; justify-content: space-between; color: #999; font-weight: 700; font-size: 14px; }
.head-bar { width: 1px; height: 50px; background: #e8e8e8; margin-left: 23px; }
.flag { width: 14px; height: 14px; border-radius: 50%; background: #bc002d; margin-left: 32px; }
.jp { margin-left: 16px; font-size: 14px; letter-spacing: -.5px; }
.mini-av { width: 24px; height: 24px; border-radius: 50%; background: #f6f6f6; margin-left: 16px; }
.acct { margin-left: 5px; font-size: 18px; letter-spacing: -.73px; color: #d3001f; }
.support { margin-left: 22px; }
.heart { margin-left: 24px; }
.cart { width: 95px; height: 42px; border: 1px solid #e8e8e8; border-radius: 21px; margin-left: 22px; display: flex; align-items: center; justify-content: center; gap: 8px; font-size: 18px; padding-left: 5px; margin-top: -1px; }

/* account sidebar */
.content { display: flex; padding-left: 240px; align-items: flex-start; }
.side { width: 342px; height: 610px; margin-top: 60px; background: #f4f4f4; }
.user { margin: 0 16px; height: 160px; border-bottom: 1px solid #e3e3e3; }
.signout { height: 30px; padding-top: 15px; text-align: right; font-size: 14px; line-height: 18px; color: #666; }
.avatar { width: 48px; height: 48px; margin: 0 auto; border: 1px solid #dcdcdc; border-radius: 50%; background: #f7f7f7; }
.uname { height: 32px; padding: 5px 2px 0 0; text-align: center; font-weight: 700; font-size: 16px; line-height: 22px; letter-spacing: -.28px; }
.ulinks { display: flex; gap: 12px; justify-content: center; font-size: 14px; line-height: 18px; letter-spacing: .06px; color: #777; height: 21px; }
.ulinks .settings { letter-spacing: -.14px; }
.ulinks a, .signout a, .rewards a, .card-r a { text-decoration: underline; }
.pts span { display: block; width: 51px; height: 18px; margin-left: 72px; background: #ffb300; color: #fff; font-size: 11.500px; letter-spacing: .13px; line-height: 17px; text-align: center; position: relative; }
.pts span::before { content: ""; position: absolute; left: 22px; top: -3px; border: 4px solid transparent; border-top: 0; border-bottom: 4px solid #ffb300; }
.member { margin: 0 16px; padding-top: 35px; height: 222px; }
.member h3 { font-weight: 700; font-size: 14px; line-height: 18px; letter-spacing: -.2px; }
.stats { display: flex; height: 44px; margin-top: 35px; }
.stats div { flex: 1; text-align: center; font-size: 14px; line-height: 18px; letter-spacing: -.23px; }
.stats div + div { border-left: 1px solid #dcdcdc; }
.stats b { display: block; font-size: 22px; line-height: 26px; height: 28px; letter-spacing: -1px; }
.rewards { height: 40px; margin-top: 16px; background: #fff; display: flex; align-items: center; justify-content: center; gap: 6px; font-size: 14px; color: #111; }
.rewards a { padding-top: 2px; }
.menu { list-style: none; border-top: 1px solid #e3e3e3; }
.menu li { height: 75px; margin-left: 16px; border-bottom: 1px solid #e3e3e3; display: flex; align-items: center; padding-right: 15px; color: #111; }
.menu li:last-child { border-bottom: 0; }
.menu li.on { color: #d3001f; }
.menu li div { margin-left: 5px; margin-right: auto; display: flex; flex-direction: column; align-items: flex-start; font-size: 14px; line-height: 16px; padding-top: 2px; letter-spacing: 0; }
.menu .mi { margin-left: 1px; }
.menu b { font-size: 16px; line-height: 17px; color: #000; letter-spacing: -.05px; }
.menu b.earned { letter-spacing: .23px; }
.menu .on b { color: #d3001f; }
.menu .ch { width: 8px; height: 11px; }

/* address book */
.book { width: 1074px; margin-left: 24px; padding-top: 50px; }
.book-head { display: flex; justify-content: space-between; align-items: flex-start; height: 50px; }
.book-head h1 { font-weight: 700; font-size: 24px; line-height: 30px; padding-top: 8px; letter-spacing: -.04px; }
.book-head button { width: 152px; height: 32px; border: 1.500px solid #000; background: #fff; padding: 0; display: flex; align-items: center; justify-content: center; gap: 6px; font: bold 12px Roboto, sans-serif; letter-spacing: -.07px; color: #000; }
.card { height: 178px; border: 1px solid #ececec; display: flex; justify-content: space-between; padding: 21px 24px 0; }
.card h2 { font-weight: 500; font-size: 18px; line-height: 26px; letter-spacing: -.06px; color: #1a1a1a; }
.phone { font-size: 15.5px; line-height: 22px; letter-spacing: -.85px; color: #999; margin-bottom: 13px; }
.addr { font-size: 15px; line-height: 23.5px; color: #111; font-weight: 300; height: 23.500px; white-space: nowrap; }
.addr .num { letter-spacing: -.45px; }
.addr .latin { letter-spacing: .06px; }
.city { letter-spacing: .06px; }
.addr .zip { letter-spacing: -.2px; }
.card-r { display: flex; flex-direction: column; align-items: flex-end; justify-content: space-between; padding-bottom: 26px; font-size: 15px; line-height: 20px; color: #222; }
.default { width: 47px; height: 24px; background: #ffebb9; color: #8f7136; font-size: 12px; line-height: 24px; text-align: center; }

.chat { position: absolute; left: 19px; top: 781px; width: 80px; height: 80px; border-radius: 50%; background: #e60020; box-shadow: 0 0 30px 7px rgba(230, 0, 32, .32); display: flex; align-items: center; justify-content: center; }
.drop { position: absolute; left: 1850px; top: 438px; width: 49px; height: 42px; border-radius: 21px 0 0 21px; background: #fff; box-shadow: 0 2px 8px rgba(0, 0, 0, .25); clip-path: inset(-14px 0 -14px -14px); padding: 8px 0 0 5px; }

.scroll { width: 21px; background: #f1f1f1; display: flex; flex-direction: column; align-items: center; }
.scroll .up { border: 5px solid transparent; border-top: 0; border-bottom: 5px solid #a3a3a3; margin-top: 9px; }
.scroll .thumb { width: 17px; height: 413px; background: #c1c1c1; margin: 7px 0 0 0; }
.scroll .down { border: 5px solid transparent; border-bottom: 0; border-top: 5px solid #505050; margin-top: auto; margin-bottom: 9px; }

/* taskbar */
.taskbar { height: 60px; background: #d9d9d9; border-top: 1px solid #a9aaa9; display: flex; font-family: "Open Sans", sans-serif; }
.weather { width: 473px; margin-left: 27px; display: flex; padding-top: 6px; flex: none; }
.weather div { display: flex; flex-direction: column; margin-left: 5px; font-size: 15px; line-height: 20px; letter-spacing: -.3px; color: #111; align-items: flex-start; padding-top: 2px; }
.weather .sub { color: #555; letter-spacing: -.28px; }
.wb { font: 14px "Open Sans", sans-serif; fill: #fff; }
.apps { display: flex; align-items: center; flex: none; }
.start { margin-right: 17px; }
.tsearch { width: 273px; height: 39px; border: 1px solid #bdbdbd; border-radius: 20px; background: #f3f3f3; display: flex; align-items: center; padding: 0 6px 0 13px; font-size: 17px; letter-spacing: -.45px; color: #5a5a5a; margin-right: 4px; }
.tsearch span { margin-left: 12px; }
.tsearch .art { margin-left: auto; }
.app { width: 55px; height: 48px; display: flex; align-items: center; justify-content: center; position: relative; }
.app svg { width: 30px; height: 30px; }
.app.run::before { content: ""; position: absolute; left: 4px; top: 0; width: 43px; height: 48px; border-radius: 6px; background: #ebebeb; box-shadow: 4px 0 0 -1px #e3e3e3, 0 0 0 1px #cfcfcf; }
.app.run svg { position: relative; }
.app.dot::after, .app.run::after { content: ""; position: absolute; left: 24px; bottom: 1px; width: 7px; height: 4px; border-radius: 2px; background: #868686; }
.app.run::after { left: 17px; width: 20px; background: #0078d4; }
.hs { font: bold 12px "Open Sans", sans-serif; fill: #000; }
.je { font: bold 7px "Open Sans", sans-serif; fill: #f07c1a; }
.pre { font: bold 9px "Open Sans", sans-serif; fill: #222; }
.tray { display: flex; align-items: center; margin-left: 85px; font-size: 15px; color: #111; flex: none; }
.t-cloud { margin-left: 33px; }
.tray .t-up { margin-right: -10px; }
.vie { margin-left: 27px; letter-spacing: -.5px; padding-bottom: 2px; }
.t-wifi { margin-left: 28px; }
.t-vol { margin-left: 9px; }
.t-bat { margin-left: 11px; }
.clock { width: 90px; display: flex; flex-direction: column; align-items: flex-end; line-height: 20px; letter-spacing: -.2px; padding-bottom: 3px; }
.clock .time { letter-spacing: -.54px; }
.t-bell { margin-left: 10px; }
.t-cop { margin-left: 21px; }
```
